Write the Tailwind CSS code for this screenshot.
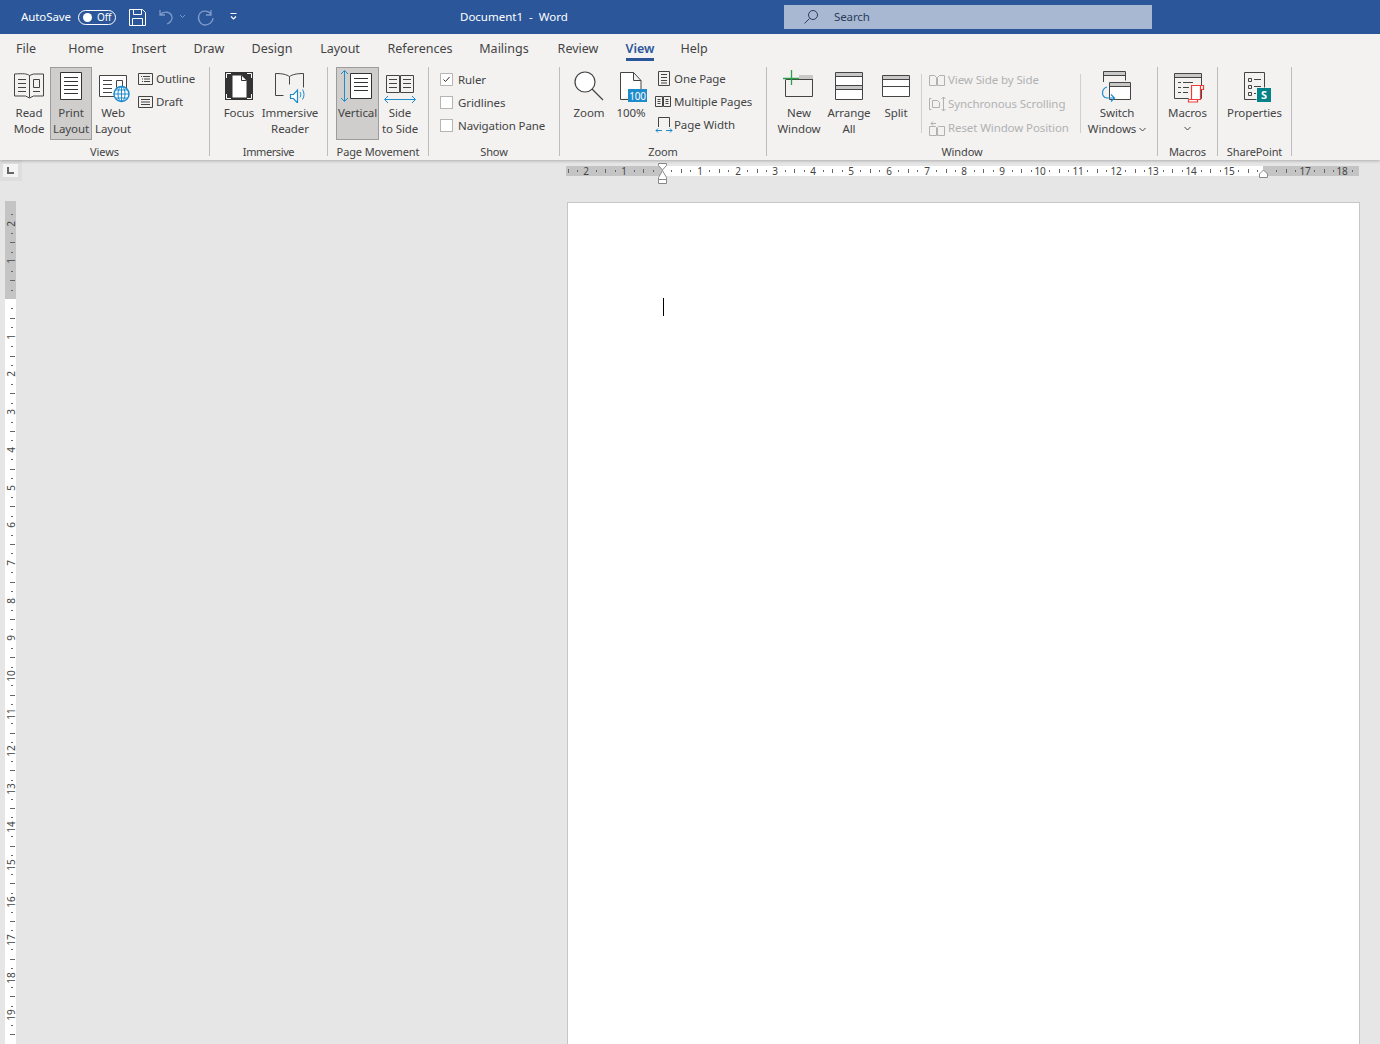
<!DOCTYPE html>
<html lang="en">
<head>
<meta charset="UTF-8">
<title>Document1 - Word</title>
<script src="https://cdn.jsdelivr.net/npm/@tailwindcss/browser@4"></script>
</head>
<body class="h-[1044px] overflow-hidden bg-[#e6e6e6] font-['Noto_Sans',sans-serif] text-[11.500px] tracking-[-0.1px] text-[#444444]">

<!-- title bar -->
<div class="flex h-[34px] items-center bg-[#2b579a] text-white">
  <span class="ml-[21px] w-[57px]">AutoSave</span>
  <div class="flex h-[15px] w-[38px] items-center rounded-full border border-white pl-[4px]">
    <span class="h-[9px] w-[9px] rounded-full bg-white"></span>
    <span class="ml-[5px] text-[10px] leading-none">Off</span>
  </div>
  <svg class="ml-[12px]" width="110" height="20" viewBox="128 7 110 20" fill="none" stroke="#fff">
    <path d="M129.500 9.500h13l3 3v13h-16z M133.500 9.500v5h8v-5 M132.500 25.500v-7h10v7"/>
    <path d="M160 10v5h5 M160 15c4-5 11-3 12 2c.5 3-2 6-5 7" stroke="#7d9ac7" stroke-width="1.300"/>
    <path d="M180 15l2.500 2.500l2.500-2.500" stroke="#7d9ac7"/>
    <path d="M211 10v5h-5 M211 14c-3-4-10-4-12 1c-2 5 2 10 6 10c4 0 8-3 8-7" stroke="#7d9ac7" stroke-width="1.300"/>
    <path d="M230.500 13.500h6 M231 16.500l2.500 2.500l2.500-2.500" stroke-width="1.200"/>
  </svg>
  <span class="ml-[222px] w-[108px] tracking-normal whitespace-pre">Document1  -  Word</span>
  <div class="ml-[216px] flex h-[24px] w-[368px] items-center bg-[#a8b8d2] text-[#2b3d5c]">
    <svg class="ml-[19px]" width="16" height="16" viewBox="0 0 16 16" fill="none" stroke="#2b3d5c"><circle cx="10" cy="6" r="4.500"/><path d="M6.500 9.500l-5 5"/></svg>
    <span class="ml-[15px]">Search</span>
  </div>
</div>

<!-- tabs -->
<div class="relative z-20 flex h-[30px] items-center bg-[#f3f2f1] text-[12.500px] tracking-normal">
  <span class="w-[52px] text-center">File</span>
  <span class="w-[68px] text-center">Home</span>
  <span class="w-[58px] text-center">Insert</span>
  <span class="w-[62px] text-center">Draw</span>
  <span class="w-[64px] text-center">Design</span>
  <span class="w-[72px] text-center">Layout</span>
  <span class="w-[88px] text-center">References</span>
  <span class="w-[80px] text-center">Mailings</span>
  <span class="w-[68px] text-center">Review</span>
  <div class="relative w-[56px] text-center font-semibold text-[#2b579a]">View
    <span class="absolute top-[18px] left-[14px] h-[3px] w-[28px] bg-[#2b579a]"></span>
  </div>
  <span class="w-[52px] text-center">Help</span>
</div>

<!-- ribbon -->
<div class="relative z-10 flex h-[96px] bg-[#f3f2f1] pt-[3px] leading-[16px] shadow-[0_1px_3px_rgba(0,0,0,0.25)]">

  <!-- Views -->
  <div class="h-[89px] w-[210px] border-r border-[#bdbdbd] pl-[8px]">
    <div class="flex h-[77px]">
      <div class="flex h-[73px] w-[42px] flex-col items-center gap-[2px] text-center">
        <svg width="42" height="36" viewBox="8 67 42 36" fill="none" stroke="#444">
          <path d="M29.500 75.500c-3-2-6-2-15-1.500v22h11l4 2l4-2h10v-22h-10z M29.500 75.500v22"/>
          <path d="M18 79.500h8M18 83.500h8M18 87.500h8M18 91.500h8M33 91.500h7"/>
          <path d="M33.500 79.500h6v8h-6z"/>
        </svg>
        <span>Read<br>Mode</span>
      </div>
      <div class="flex h-[73px] w-[42px] flex-col items-center gap-[2px] border border-[#9c9c9c] bg-[#cfcecc] text-center">
        <svg class="-mx-px" width="42" height="35" viewBox="50 68 42 35" fill="#fff" stroke="#333">
          <path d="M60.500 72.500h21v27h-21z"/>
          <path d="M64 77.500h14M64 81.500h14M64 85.500h14M64 89.500h14M64 93.500h14"/>
        </svg>
        <span class="whitespace-nowrap">Print<br>Layout</span>
      </div>
      <div class="flex h-[73px] w-[42px] flex-col items-center gap-[2px] text-center">
        <svg width="42" height="36" viewBox="92 67 42 36" fill="none" stroke="#444">
          <path d="M99.500 75.500h27v21h-27z" fill="#fff"/>
          <path d="M103 80.500h9M103 84.500h9M103 88.500h9M103 92.500h9M116.500 80.500h6v7h-6z"/>
          <circle cx="121.500" cy="94" r="7.500" fill="#fff" stroke="#1e8bcd" stroke-width="1.500"/>
          <path d="M114 94h15M115.500 90h12M115.500 98h12M121.500 86.500v15" stroke="#1e8bcd"/>
          <ellipse cx="121.500" cy="94" rx="3.500" ry="7.500" stroke="#1e8bcd"/>
        </svg>
        <span class="whitespace-nowrap">Web<br>Layout</span>
      </div>
      <div class="flex flex-col pl-[3px]">
        <div class="flex h-[23px] items-center">
          <svg width="16" height="14" viewBox="0 0 16 14" fill="none" stroke="#444"><path d="M1.500 1.500h14v11h-14z M4 4.500h1M6 4.500h7M5 7h1M7 7h6M5 9.500h1M7 9.500h6"/></svg>
          <span class="ml-[3px]">Outline</span>
        </div>
        <div class="flex h-[23px] items-center">
          <svg width="16" height="14" viewBox="0 0 16 14" fill="none" stroke="#444"><path d="M1.500 1.500h14v11h-14z M4 4.500h9M4 7h9M4 9.500h9"/></svg>
          <span class="ml-[3px]">Draft</span>
        </div>
      </div>
    </div>
    <div class="-ml-[8px] text-center text-[11px]">Views</div>
  </div>

  <!-- Immersive -->
  <div class="h-[89px] w-[118px] border-r border-[#bdbdbd] pl-[8px]">
    <div class="flex h-[77px]">
      <div class="flex w-[42px] flex-col items-center gap-[2px] text-center">
        <svg width="42" height="36" viewBox="218 67 42 36" fill="none">
          <path d="M225 72h28v28h-28z" fill="#333"/>
          <path d="M232.500 75.500h9l5 5v17h-14z" fill="#fff"/>
          <path d="M241.500 75.500v5h5" stroke="#333"/>
          <path d="M226.500 78v-4.500h4.500M247 73.500h4.500v4.500M226.500 94v4.500h4.500M247 98.500h4.500v-4.500" stroke="#fff"/>
        </svg>
        <span>Focus</span>
      </div>
      <div class="flex w-[60px] flex-col items-center gap-[2px] text-center">
        <svg width="60" height="36" viewBox="260 67 60 36" fill="none" stroke="#444">
          <path d="M289.500 76.500c-3-2-7-3-14-3v22h8 M289.500 76.500c3-2 7-3 14-3v14 M289.500 76.500v8"/>
          <path d="M290.500 94.500h3l4-4.500v13l-4-4.500h-3z" stroke="#1e8bcd" fill="#fff" stroke-width="1.200"/>
          <path d="M300 92c1 1.500 1 4 0 5.500M302.500 89.500c2 3 2 7 0 10" stroke="#1e8bcd"/>
        </svg>
        <span class="whitespace-nowrap">Immersive<br>Reader</span>
      </div>
    </div>
    <div class="-ml-[8px] text-center text-[11px] tracking-[-0.4px]">Immersive</div>
  </div>

  <!-- Page Movement -->
  <div class="h-[89px] w-[101px] border-r border-[#bdbdbd] pl-[8px]">
    <div class="flex h-[77px]">
      <div class="flex h-[73px] w-[43px] flex-col items-center gap-[2px] border border-[#9c9c9c] bg-[#cfcecc] text-center">
        <svg class="-mx-px" width="43" height="35" viewBox="336 68 43 35" fill="none" stroke="#333">
          <path d="M350.500 73.500h21v25h-21z" fill="#fff"/>
          <path d="M354 78.500h14M354 82.500h14M354 86.500h14M354 90.500h14"/>
          <path d="M344.500 71v30M341 74l3.500-3.500l3.500 3.500M341 98l3.500 3.500l3.500-3.500" stroke="#1e8bcd"/>
        </svg>
        <span>Vertical</span>
      </div>
      <div class="flex w-[42px] flex-col items-center gap-[2px] text-center">
        <svg width="42" height="36" viewBox="379 67 42 36" fill="none" stroke="#444">
          <path d="M386.500 75.500h13v17h-13z M400.500 75.500h13v17h-13z"/>
          <path d="M389 79.500h8M389 83.500h8M389 87.500h8M403 79.500h8M403 83.500h8M403 87.500h8"/>
          <path d="M385 99.500h30M388 96l-3.500 3.500l3.500 3.500M412 96l3.500 3.500l-3.500 3.500" stroke="#1e8bcd"/>
        </svg>
        <span class="whitespace-nowrap">Side<br>to Side</span>
      </div>
    </div>
    <div class="-ml-[8px] text-center text-[11px] whitespace-nowrap">Page Movement</div>
  </div>

  <!-- Show -->
  <div class="h-[89px] w-[131px] border-r border-[#bdbdbd] pl-[11px]">
    <div class="h-[77px] pt-px">
      <div class="flex h-[23px] items-center">
        <svg width="13" height="13" viewBox="0 0 13 13" fill="#fff" stroke="#b5b5b5"><path d="M.500.500h12v12h-12z"/><path d="M3.500 6.500l2 2l4-4.500" fill="none" stroke="#333"/></svg>
        <span class="ml-[5px]">Ruler</span>
      </div>
      <div class="flex h-[23px] items-center">
        <span class="h-[13px] w-[13px] border border-[#b5b5b5] bg-white"></span>
        <span class="ml-[5px]">Gridlines</span>
      </div>
      <div class="flex h-[23px] items-center">
        <span class="h-[13px] w-[13px] border border-[#b5b5b5] bg-white"></span>
        <span class="ml-[5px] whitespace-nowrap">Navigation Pane</span>
      </div>
    </div>
    <div class="-ml-[11px] text-center text-[11px]">Show</div>
  </div>

  <!-- Zoom -->
  <div class="h-[89px] w-[207px] border-r border-[#bdbdbd] pl-[8px]">
    <div class="flex h-[77px]">
      <div class="flex w-[42px] flex-col items-center gap-[2px] text-center">
        <svg width="42" height="36" viewBox="568 67 42 36" fill="none" stroke="#444">
          <circle cx="585" cy="82" r="10" fill="#fff" stroke-width="1.200"/>
          <path d="M592 89l11 11" stroke-width="1.200"/>
        </svg>
        <span>Zoom</span>
      </div>
      <div class="flex w-[42px] flex-col items-center gap-[2px] text-center">
        <svg width="42" height="36" viewBox="610 67 42 36" fill="none" stroke="#444">
          <path d="M620.500 99.500v-27h13l7.500 8v9M620.500 99.500h8M633.500 72.500v8h7.500" fill="#fff"/>
          <path d="M628 89h19v13h-19z" fill="#1e8bcd" stroke="none"/>
          <text x="637.500" y="99.500" text-anchor="middle" fill="#fff" stroke="none" font-size="10" letter-spacing="-0.3" font-family="Noto Sans">100</text>
        </svg>
        <span>100%</span>
      </div>
      <div class="flex flex-col pl-[3px]">
        <div class="flex h-[23px] items-center">
          <svg width="19" height="16" viewBox="0 0 19 16" fill="none" stroke="#444"><path d="M3.500.500h11v14h-11z M6 3.500h6M6 6.500h6M6 9.500h6M6 12h6"/></svg>
          <span>One Page</span>
        </div>
        <div class="flex h-[23px] items-center">
          <svg width="19" height="12" viewBox="0 0 19 12" fill="none" stroke="#444"><path d="M.500.500h7v10h-7z M8.500.500h7v10h-7z M2.500 3.500h3M2.500 5.500h3M2.500 7.500h3M10.500 3.500h3M10.500 5.500h3M10.500 7.500h3"/></svg>
          <span class="whitespace-nowrap">Multiple Pages</span>
        </div>
        <div class="flex h-[23px] items-center">
          <svg width="19" height="18" viewBox="0 0 19 18" fill="none"><path d="M3.500 11v-9.500h11v9.500" stroke="#444"/><path d="M1 14.500h6M3 12.500l-2 2l2 2M11 14.500h6M15 12.500l2 2l-2 2" stroke="#1e8bcd"/></svg>
          <span>Page Width</span>
        </div>
      </div>
    </div>
    <div class="-ml-[8px] text-center text-[11px]">Zoom</div>
  </div>

  <!-- Window -->
  <div class="h-[89px] w-[391px] border-r border-[#bdbdbd] pl-[8px]">
    <div class="flex h-[77px]">
      <div class="flex w-[48px] flex-col items-center gap-[2px] text-center">
        <svg width="48" height="36" viewBox="775 67 48 36" fill="none" stroke="#444">
          <path d="M785.500 80v16.500h27v-21h-10"/>
          <path d="M799 75h14v4h-14z" fill="#c8c8c8" stroke="none"/>
          <path d="M785.500 79.500h27"/>
          <path d="M791.500 70v15M783 78.500h16" stroke="#2ea04d" stroke-width="1.300"/>
        </svg>
        <span class="whitespace-nowrap">New<br>Window</span>
      </div>
      <div class="flex w-[52px] flex-col items-center gap-[2px] text-center">
        <svg width="52" height="36" viewBox="823 67 52 36" fill="none" stroke="#444">
          <path d="M835.500 72.500h27v27h-27z" fill="#fff"/>
          <path d="M836 73h26v4h-26zM836 85h26v4h-26z" fill="#c8c8c8" stroke="none"/>
          <path d="M835.500 76.500h27M835.500 85.500h27M835.500 89.500h27"/>
        </svg>
        <span>Arrange<br>All</span>
      </div>
      <div class="flex w-[42px] flex-col items-center gap-[2px] text-center">
        <svg width="42" height="36" viewBox="875 67 42 36" fill="none" stroke="#444">
          <path d="M882.500 75.500h27v21h-27z" fill="#fff"/>
          <path d="M883 76h26v3h-26z" fill="#c8c8c8" stroke="none"/>
          <path d="M882.500 79.500h27M882.500 86.500h27"/>
        </svg>
        <span>Split</span>
      </div>
      <div class="mt-[7px] ml-[4px] h-[59px] w-px bg-[#cfcfcf]"></div>
      <div class="flex w-[158px] flex-col pt-px pl-[7px] whitespace-nowrap text-[#b1b1b1]">
        <div class="flex h-[24px] items-center">
          <svg width="19" height="14" viewBox="0 0 19 14" fill="none" stroke="#b1b1b1"><path d="M.500 2.500h5l2 2v8h-7z M8.500 4.500l2-2h5v10h-7z"/></svg>
          <span>View Side by Side</span>
        </div>
        <div class="flex h-[24px] items-center">
          <svg width="19" height="16" viewBox="0 0 19 16" fill="none" stroke="#b1b1b1"><path d="M2.500 2.500h-2v11h2 M3.500 4.500h5l2 2v5h-7z M14.500 1v14M12.500 3l2-2l2 2M12.500 13l2 2l2-2"/></svg>
          <span>Synchronous Scrolling</span>
        </div>
        <div class="flex h-[24px] items-center">
          <svg width="19" height="16" viewBox="0 0 19 16" fill="none" stroke="#b1b1b1"><path d="M.500 6.500h6l1 1v8h-7z M8.500 7.500l1-1h6v9h-7z M2 3.500h5M2 3.500l2-2M2 3.500l2 2"/></svg>
          <span>Reset Window Position</span>
        </div>
      </div>
      <div class="mt-[7px] h-[59px] w-px bg-[#cfcfcf]"></div>
      <div class="flex w-[72px] flex-col items-center gap-[2px] text-center">
        <svg width="72" height="36" viewBox="1081 67 72 36" fill="none" stroke="#444">
          <path d="M1103.500 82v-10.500h22v9"/>
          <path d="M1104 72h21v3h-21z" fill="#c8c8c8" stroke="none"/>
          <path d="M1103.500 75.500h22"/>
          <path d="M1109.500 82.500h21v17h-21z" fill="#fff"/>
          <path d="M1110 83h20v3h-20z" fill="#c8c8c8" stroke="none"/>
          <path d="M1109.500 86.500h21"/>
          <path d="M1107 87c-6 2-6 10 0 11h7M1111 94.500l3.500 3.500l-3.500 3.500" stroke="#1e8bcd" stroke-width="1.200"/>
        </svg>
        <span class="whitespace-nowrap">Switch<br>Windows <svg class="inline" width="7" height="5" viewBox="0 0 7 5" fill="none" stroke="#444"><path d="M.500 1l3 3l3-3"/></svg></span>
      </div>
    </div>
    <div class="-ml-[8px] text-center text-[11px]">Window</div>
  </div>

  <!-- Macros -->
  <div class="h-[89px] w-[60px] border-r border-[#bdbdbd]">
    <div class="flex h-[77px] flex-col items-center gap-[2px]">
      <svg width="59" height="36" viewBox="1158 67 59 36" fill="none" stroke="#444">
        <path d="M1174.500 73.500h27v25h-27z"/>
        <path d="M1175 74h26v3h-26z" fill="#c8c8c8" stroke="none"/>
        <path d="M1174.500 77.500h27M1178 82.500h3M1183 82.500h10M1178 87.500h3M1183 87.500h6M1178 92.500h3M1183 92.500h5"/>
        <path d="M1191.500 87v-1.500h9v14h-12M1200.500 85.500h3v4h-3M1188.500 99.500v2.500h9v-2.500M1191.500 87v12" stroke="#ed3b3b" fill="#fff" stroke-width="1.200"/>
      </svg>
      <span>Macros</span>
      <svg class="mt-[3px]" width="7" height="5" viewBox="0 0 7 5" fill="none" stroke="#444"><path d="M.500 1l3 3l3-3"/></svg>
    </div>
    <div class="text-center text-[11px]">Macros</div>
  </div>

  <!-- SharePoint -->
  <div class="h-[89px] w-[74px] border-r border-[#bdbdbd]">
    <div class="flex h-[77px] flex-col items-center gap-[2px]">
      <svg width="73" height="36" viewBox="1218 67 73 36" fill="none" stroke="#444">
        <path d="M1244.500 72.500h20v15M1244.500 72.500v27h12"/>
        <path d="M1248.500 78.500h3v3h-3zM1248.500 85.500h3v3h-3zM1248.500 92.500h3v3h-3zM1254 79.500h7M1254 86.500h7M1254 93.500h2"/>
        <path d="M1257 88h14v14h-14z" fill="#038387" stroke="none"/>
        <text x="1264" y="99" text-anchor="middle" fill="#fff" stroke="none" font-size="11" font-weight="700" font-family="Noto Sans">S</text>
      </svg>
      <span>Properties</span>
    </div>
    <div class="text-center text-[11px] whitespace-nowrap">SharePoint</div>
  </div>
</div>

<!-- document area -->
<div class="flex">
  <div class="w-[566px]">
    <div class="flex h-[21px] w-[22px] items-center bg-[#dedede] pl-[3px]">
      <div class="flex h-[13px] w-[15px] items-center justify-center bg-[#f4f4f4]">
        <svg width="7" height="7" viewBox="0 0 7 7" fill="none" stroke="#666" stroke-width="2"><path d="M1 0v6h6"/></svg>
      </div>
    </div>
    <svg id="vruler" class="mt-[20px] ml-[5px] block overflow-visible" width="11" height="843" viewBox="5 201 11 843"></svg>
  </div>
  <div class="pt-[6px]">
    <svg id="hruler" class="block overflow-visible" width="793" height="10" viewBox="566 166 793 10"></svg>
    <div class="mt-[26px] ml-px h-[842px] w-[793px] border-t border-r border-l border-[#c6c6c6] bg-white pt-[95px] pl-[95px]">
      <div class="h-[18px] w-px bg-black"></div>
    </div>
  </div>
</div>

<script>
  // rulers are just repeated ticks, so build them
  var unit = 37.8;
  var h = '<rect x="566" y="166" width="793" height="10" fill="#fff"/>';
  h += '<rect x="566" y="166" width="96" height="10" fill="#c4c4c4"/><rect x="1263" y="166" width="96" height="10" fill="#c4c4c4"/>';
  for (var i = -2.5; i <= 18.25; i += 0.25) {
    var x = Math.round(662 + i * unit);
    if (i % 1 === 0) {
      // 0 and 16 sit under the indent markers
      if (i !== 0 && i !== 16) h += '<text x="' + x + '" y="175" text-anchor="middle" font-size="10" font-family="Noto Sans" fill="#444">' + Math.abs(i) + '</text>';
    } else if (i % 0.5 === 0) {
      h += '<rect x="' + x + '" y="169" width="1" height="4" fill="#666"/>';
    } else {
      h += '<rect x="' + x + '" y="170" width="1" height="2" fill="#666"/>';
    }
  }
  // indent markers
  h += '<path d="M658.500 163.500h8v2l-4 4.500l-4-4.500z M658.500 179.500l0-2l4-7l4 7v2z M658.500 179.500h8v4h-8z" fill="#fff" stroke="#888"/>';
  h += '<path d="M1259.500 177.500v-3.500l4-4l4 4v3.500z" fill="#fff" stroke="#888"/>';
  document.getElementById('hruler').innerHTML = h;

  var v = '<rect x="5" y="201" width="11" height="843" fill="#fff"/><rect x="5" y="201" width="11" height="98" fill="#c4c4c4"/>';
  for (var j = -2.25; j <= 19.75; j += 0.25) {
    var y = Math.round(299 + j * 37.7);
    if (j % 1 === 0) {
      if (j !== 0) v += '<text transform="translate(15 ' + y + ') rotate(-90)" text-anchor="middle" font-size="10" font-family="Noto Sans" fill="#444">' + Math.abs(j) + '</text>';
    } else if (j % 0.5 === 0) {
      v += '<rect x="10" y="' + y + '" width="5" height="1" fill="#666"/>';
    } else {
      v += '<rect x="11" y="' + y + '" width="2" height="1" fill="#666"/>';
    }
  }
  document.getElementById('vruler').innerHTML = v;
</script>
</body>
</html>
